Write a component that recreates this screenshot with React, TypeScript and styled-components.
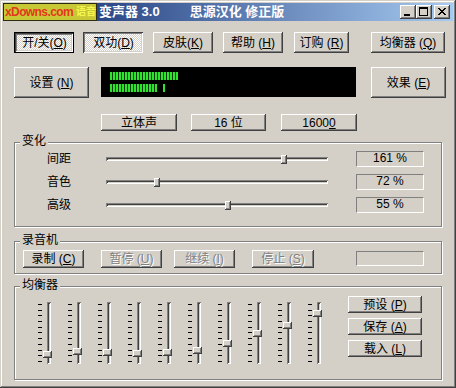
import { Fragment } from 'react'
import styled, { createGlobalStyle } from 'styled-components'

const FACE = '#d4d0c8'
const SHADOW = '#808080'
const DARK = '#404040'
const FONT = `"Liberation Sans", "Noto Sans CJK SC", sans-serif`

const raisedShadow = `inset -1px -1px ${DARK}, inset 1px 1px #fff, inset -2px -2px ${SHADOW}, inset 2px 2px ${FACE}`
const sunkenShadow = `inset 1px 1px ${DARK}, inset -1px -1px #fff, inset 2px 2px ${SHADOW}, inset -2px -2px ${FACE}`

const GlobalStyle = createGlobalStyle`
  html, body { margin: 0; padding: 0; background: ${FACE}; }
  body { font-family: ${FONT}; font-size: 12px; color: #000; }
  *, *::before, *::after { box-sizing: border-box; }
`

const Window = styled.div`
  width: 456px;
  height: 388px;
  padding: 3px;
  background: ${FACE};
  box-shadow: inset -1px -1px ${DARK}, inset 1px 1px ${FACE}, inset -2px -2px ${SHADOW}, inset 2px 2px #fff;
  overflow: hidden;
`

const TitleBar = styled.div`
  height: 18px;
  display: flex;
  align-items: center;
  padding-right: 3px;
  background: linear-gradient(90deg, #0a246a, #a6caf0);
  color: #fff;
  font-weight: bold;
  font-size: 13px;
  line-height: 16px;
  white-space: nowrap;
`

const Logo = styled.div`
  flex: none;
  width: 94px;
  height: 18px;
  display: flex;
  align-items: center;
  border: 1px solid #2c2c12;
  background: #c8c836;
`

const LogoText = styled.span`
  color: #e2381c;
  font-family: "Liberation Sans", sans-serif;
  font-size: 12px;
  letter-spacing: -0.6px;
  margin-left: 1px;
`

const LogoCjk = styled.span`
  color: #f6f650;
  font-size: 10px;
  line-height: 12px;
  margin: 0 0 0 auto;
`

const Caption = styled.span<{ $ml: number }>`
  margin-left: ${(p) => p.$ml}px;
`

const CapGroup = styled.div`
  display: flex;
  margin-left: auto;
`

const CapBtn = styled.div<{ $ml?: number }>`
  width: 16px;
  height: 14px;
  margin-left: ${(p) => p.$ml ?? 0}px;
  background: ${FACE};
  box-shadow: ${raisedShadow};
  display: flex;
  align-items: center;
  justify-content: center;
`

const Body = styled.div`
  padding: 11px 0 0 11px;
`

const Row = styled.div<{ $mt?: number; $pl?: number }>`
  display: flex;
  align-items: flex-start;
  margin-top: ${(p) => p.$mt ?? 0}px;
  padding-left: ${(p) => p.$pl ?? 0}px;
`

const Btn = styled.button<{ $w: number; $h: number; $ml?: number; $down?: boolean; $focus?: boolean }>`
  flex: none;
  width: ${(p) => p.$w}px;
  height: ${(p) => p.$h}px;
  margin: 0 0 0 ${(p) => p.$ml ?? 0}px;
  padding: ${(p) => (p.$down ? '1px 0 0 1px' : '0')};
  border: ${(p) => (p.$focus ? '1px solid #000' : 'none')};
  background-color: ${FACE};
  ${(p) =>
    p.$down
      ? `background-image: repeating-conic-gradient(#fff 0 25%, ${FACE} 0 50%); background-size: 2px 2px;`
      : ''}
  box-shadow: ${(p) => (p.$down ? sunkenShadow : raisedShadow)};
  font-family: ${FONT};
  font-size: 12px;
  line-height: 14px;
  color: #000;
  display: flex;
  align-items: center;
  justify-content: center;
  white-space: nowrap;

  &:disabled {
    color: ${SHADOW};
    text-shadow: 1px 1px #fff;
  }
`

const Meter = styled.div`
  flex: none;
  width: 255px;
  height: 30px;
  margin-left: 12px;
  background: #000;
  display: flex;
  flex-direction: column;
  gap: 4px;
  padding: 5px 0 0 9px;
`

const MeterRow = styled.div`
  display: flex;
  height: 8px;
`

const Bars = styled.div<{ $w: number; $ml?: number }>`
  width: ${(p) => p.$w}px;
  height: 8px;
  margin-left: ${(p) => p.$ml ?? 0}px;
  background: repeating-linear-gradient(90deg, #2ee42e 0 2px, #0a3a0a 2px 3px);
`

const Group = styled.div<{ $h: number; $mt: number }>`
  position: relative;
  width: 428px;
  height: ${(p) => p.$h}px;
  margin-top: ${(p) => p.$mt}px;
  border: 1px solid ${SHADOW};
  box-shadow: 1px 1px #fff, inset 1px 1px #fff;
`

const Legend = styled.span`
  position: absolute;
  top: -9px;
  left: 5px;
  padding: 0 2px;
  background: ${FACE};
  line-height: 14px;
`

const ParamGrid = styled.div`
  display: grid;
  grid-template-columns: 59px 250px 68px;
  grid-auto-rows: 23px;
  align-items: center;
  padding: 4px 0 0 32px;
`

const ParamLabel = styled.span`
  line-height: 14px;
`

const HTrack = styled.div`
  position: relative;
  width: 222px;
  height: 4px;
  box-shadow: inset 1px 1px ${SHADOW}, inset -1px -1px #fff, inset 2px 2px ${DARK};
`

const HThumb = styled.div`
  position: absolute;
  top: -2px;
  width: 6px;
  height: 9px;
  background: ${FACE};
  box-shadow: inset -1px -1px ${DARK}, inset 1px 1px #fff, inset -2px -2px ${SHADOW};
`

const ValueBox = styled.div<{ $w: number; $h: number; $ml?: number; $mt?: number }>`
  flex: none;
  width: ${(p) => p.$w}px;
  height: ${(p) => p.$h}px;
  margin: ${(p) => p.$mt ?? 0}px 0 0 ${(p) => p.$ml ?? 0}px;
  border-style: solid;
  border-width: 1px;
  border-color: ${SHADOW} #fff #fff ${SHADOW};
  display: flex;
  align-items: center;
  justify-content: center;
  line-height: 13px;
`

const GroupRow = styled.div<{ $pt: number; $pl: number }>`
  display: flex;
  align-items: flex-start;
  padding: ${(p) => p.$pt}px 0 0 ${(p) => p.$pl}px;
`

const EqBank = styled.div`
  display: flex;
  margin-top: 6px;
`

const EqCol = styled.div`
  position: relative;
  display: flex;
  width: 30px;
  height: 62px;
`

const Ticks = styled.div`
  width: 4px;
  height: 58px;
  margin-top: 2px;
  display: flex;
  flex-direction: column;
  justify-content: space-between;
`

const Tick = styled.i`
  display: block;
  height: 1px;
  background: #000;
`

const VTrack = styled.div`
  width: 4px;
  height: 62px;
  margin-left: 5px;
  box-shadow: inset 1px 1px ${SHADOW}, inset -1px -1px #fff, inset 2px 2px ${DARK};
`

const VThumb = styled.div`
  position: absolute;
  left: 5px;
  width: 9px;
  height: 7px;
  background: ${FACE};
  box-shadow: inset -1px -1px ${DARK}, inset 1px 1px #fff, inset -2px -2px ${SHADOW};
`

const EqButtons = styled.div`
  display: flex;
  flex-direction: column;
  gap: 5px;
  margin-left: 10px;
`

const Acc = ({ t, k, sp }: { t: string; k: string; sp?: boolean }) => (
  <span>
    {t}
    {sp ? ' ' : ''}(<u>{k}</u>)
  </span>
)

const params = [
  { label: '间距', pos: 80, value: '161 %' },
  { label: '音色', pos: 23, value: '72 %' },
  { label: '高级', pos: 55, value: '55 %' },
]

const eqTops = [49, 46, 47, 48, 47, 45, 38, 28, 20, 8]

export default function App() {
  return (
    <>
      <GlobalStyle />
      <Window>
        <TitleBar>
          <Logo>
            <LogoText>xDowns.com</LogoText>
            <LogoCjk>语音</LogoCjk>
          </Logo>
          <Caption $ml={2}>变声器 3.0</Caption>
          <Caption $ml={30}>思源汉化 修正版</Caption>
          <CapGroup>
            <CapBtn>
              <svg width="16" height="14" viewBox="0 0 16 14">
                <rect x="4" y="9" width="6" height="2" fill="#000" />
              </svg>
            </CapBtn>
            <CapBtn>
              <svg width="16" height="14" viewBox="0 0 16 14">
                <rect x="3.5" y="2.5" width="8" height="8" fill="none" stroke="#000" />
                <rect x="3" y="2" width="9" height="2" fill="#000" />
              </svg>
            </CapBtn>
            <CapBtn $ml={2}>
              <svg width="16" height="14" viewBox="0 0 16 14">
                <path d="M4 3 L11 10 M5 3 L12 10 M11 3 L4 10 M12 3 L5 10" stroke="#000" strokeWidth="1" />
              </svg>
            </CapBtn>
          </CapGroup>
        </TitleBar>

        <Body>
          <Row>
            <Btn $w={60} $h={21} $down $focus>
              <Acc t="开/关" k="O" />
            </Btn>
            <Btn $w={60} $h={21} $ml={9} $down>
              <Acc t="双功" k="D" />
            </Btn>
            <Btn $w={60} $h={21} $ml={10}>
              <Acc t="皮肤" k="K" />
            </Btn>
            <Btn $w={60} $h={21} $ml={10}>
              <Acc t="帮助" k="H" sp />
            </Btn>
            <Btn $w={55} $h={21} $ml={11}>
              <Acc t="订购" k="R" sp />
            </Btn>
            <Btn $w={74} $h={21} $ml={22}>
              <Acc t="均衡器" k="Q" sp />
            </Btn>
          </Row>

          <Row $mt={14}>
            <Btn $w={75} $h={31}>
              <Acc t="设置" k="N" sp />
            </Btn>
            <Meter>
              <MeterRow>
                <Bars $w={68} />
              </MeterRow>
              <MeterRow>
                <Bars $w={47} />
                <Bars $w={2} $ml={6} />
              </MeterRow>
            </Meter>
            <Btn $w={75} $h={31} $ml={15}>
              <Acc t="效果" k="E" sp />
            </Btn>
          </Row>

          <Row $mt={16} $pl={87}>
            <Btn $w={76} $h={17}>立体声</Btn>
            <Btn $w={75} $h={17} $ml={14}>16 位</Btn>
            <Btn $w={76} $h={17} $ml={15}>
              <span>
                1600<u>0</u>
              </span>
            </Btn>
          </Row>

          <Group $h={85} $mt={11}>
            <Legend>变化</Legend>
            <ParamGrid>
              {params.map((p) => (
                <Fragment key={p.label}>
                  <ParamLabel>{p.label}</ParamLabel>
                  <HTrack>
                    <HThumb style={{ left: `calc(${p.pos}% - 3px)` }} />
                  </HTrack>
                  <ValueBox $w={68} $h={16}>
                    {p.value}
                  </ValueBox>
                </Fragment>
              ))}
            </ParamGrid>
          </Group>

          <Group $h={33} $mt={14}>
            <Legend>录音机</Legend>
            <GroupRow $pt={8} $pl={8}>
              <Btn $w={61} $h={18}>
                <Acc t="录制" k="C" sp />
              </Btn>
              <Btn $w={61} $h={18} $ml={17} disabled>
                <Acc t="暂停" k="U" sp />
              </Btn>
              <Btn $w={61} $h={18} $ml={12} disabled>
                <Acc t="继续" k="I" sp />
              </Btn>
              <Btn $w={62} $h={18} $ml={17} disabled>
                <Acc t="停止" k="S" sp />
              </Btn>
              <ValueBox $w={68} $h={15} $ml={42} $mt={1} />
            </GroupRow>
          </Group>

          <Group $h={94} $mt={12}>
            <Legend>均衡器</Legend>
            <GroupRow $pt={9} $pl={23}>
              <EqBank>
                {eqTops.map((top, i) => (
                  <EqCol key={i}>
                    <Ticks>
                      {Array.from({ length: 11 }).map((_, j) => (
                        <Tick key={j} />
                      ))}
                    </Ticks>
                    <VTrack />
                    <VThumb style={{ top }} />
                  </EqCol>
                ))}
              </EqBank>
              <EqButtons>
                <Btn $w={74} $h={17}>
                  <Acc t="预设" k="P" sp />
                </Btn>
                <Btn $w={74} $h={17}>
                  <Acc t="保存" k="A" sp />
                </Btn>
                <Btn $w={74} $h={17}>
                  <Acc t="载入" k="L" sp />
                </Btn>
              </EqButtons>
            </GroupRow>
          </Group>
        </Body>
      </Window>
    </>
  )
}
